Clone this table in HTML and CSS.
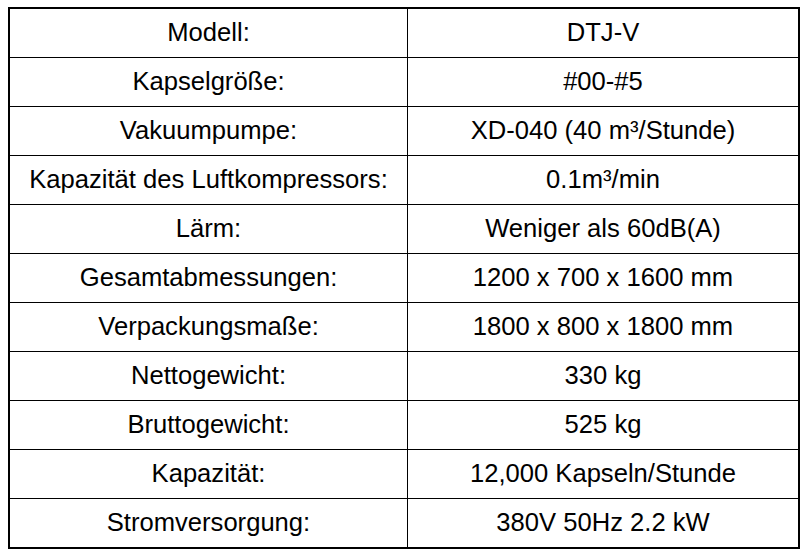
FILE: index.html
```html
<!DOCTYPE html>
<html lang="de">
<head>
<meta charset="utf-8">
<title>Technische Daten DTJ-V</title>
<link rel="stylesheet" href="styles.css">
</head>
<body>
<div class="spec">
  <div class="cell key">Modell:</div><div class="cell val">DTJ-V</div>
  <div class="cell key">Kapselgröße:</div><div class="cell val">#00-#5</div>
  <div class="cell key">Vakuumpumpe:</div><div class="cell val">XD-040 (40 m³/Stunde)</div>
  <div class="cell key">Kapazität des Luftkompressors:</div><div class="cell val">0.1m³/min</div>
  <div class="cell key">Lärm:</div><div class="cell val">Weniger als 60dB(A)</div>
  <div class="cell key">Gesamtabmessungen:</div><div class="cell val">1200 x 700 x 1600 mm</div>
  <div class="cell key">Verpackungsmaße:</div><div class="cell val">1800 x 800 x 1800 mm</div>
  <div class="cell key">Nettogewicht:</div><div class="cell val">330 kg</div>
  <div class="cell key">Bruttogewicht:</div><div class="cell val">525 kg</div>
  <div class="cell key">Kapazität:</div><div class="cell val">12,000 Kapseln/Stunde</div>
  <div class="cell key last">Stromversorgung:</div><div class="cell val last">380V 50Hz 2.2 kW</div>
</div>
</body>
</html>
```
FILE: styles.css
```css
html, body {
  margin: 0;
  padding: 0;
  background: #ffffff;
}
body {
  padding: 7px 0 0 8px;
  font-family: "Liberation Sans", Arial, sans-serif;
  color: #000000;
}
.spec {
  width: 792px;
  box-sizing: border-box;
  border: 2px solid #000000;
  display: grid;
  grid-template-columns: 398px 1fr;
}
.cell {
  height: 48px;
  border-bottom: 1px solid #000000;
  display: flex;
  align-items: center;
  justify-content: center;
  font-size: 25.6px;
  line-height: 1;
  white-space: nowrap;
}
.key {
  border-right: 1px solid #000000;
}
.last {
  border-bottom: none;
}
```
